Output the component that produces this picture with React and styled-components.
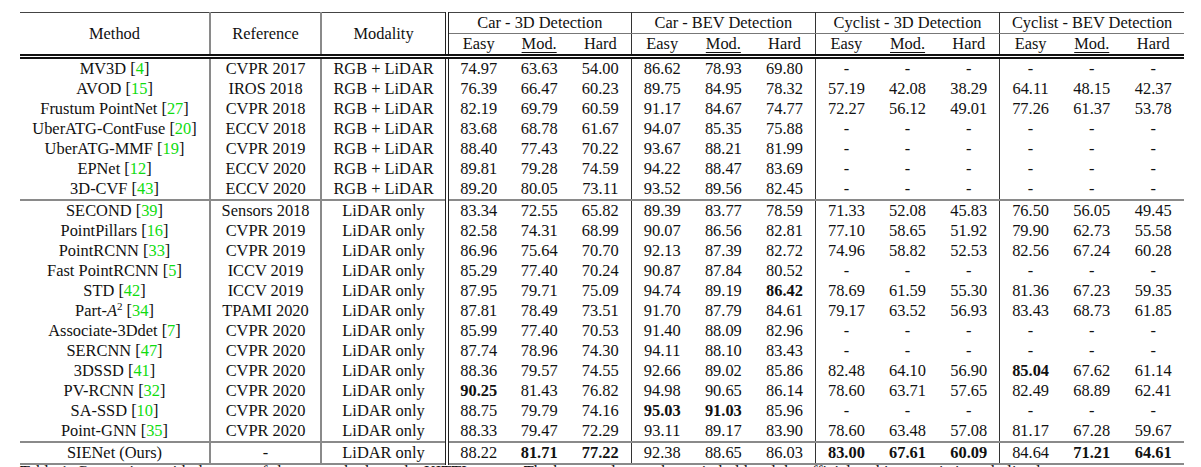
import React from "react";
import styled, { createGlobalStyle } from "styled-components";

const GlobalStyle = createGlobalStyle`
  html, body {
    margin: 0;
    padding: 0;
    background: #fff;
  }
  body {
    font-family: "Liberation Serif", "Times New Roman", serif;
    color: #111;
    overflow: hidden;
  }
`;

const Page = styled.div`
  padding: 12px 0 0 20px;
  width: 1164px;
`;

const Table = styled.table`
  width: 1164px;
  border-collapse: collapse;
  table-layout: fixed;
  font-size: 16.4px;
  border-top: 1px solid #444;
  border-bottom: 2px solid #8a8a8a;
`;

const Col = styled.col`
  width: ${({ $w }) => $w}px;
`;

const edgeStyles = {
  gray: "border-right: 2px solid #8a8a8a;",
  double: "border-right: 4px double #222;",
  group: "border-right: 1px solid #333;",
};

const HeadCell = styled.th`
  padding: 0;
  height: 20px;
  line-height: 20px;
  font-weight: 400;
  text-align: center;
  white-space: nowrap;
  ${({ $edge }) => edgeStyles[$edge] || ""}
  ${({ $split }) => ($split ? "border-bottom: 1px solid #777;" : "")}
  ${({ $rule }) => ($rule ? "border-bottom: 5px double #111;" : "")}
`;

const Underlined = styled.span`
  text-decoration: underline;
  text-decoration-thickness: 1px;
  text-underline-offset: 3px;
`;

const Row = styled.tr`
  ${({ $rule }) => ($rule ? "td { border-top: 2px solid #8a8a8a; }" : "")}
`;

const Cell = styled.td`
  padding: 0;
  height: 20px;
  line-height: 20px;
  text-align: center;
  white-space: nowrap;
  font-weight: ${({ $bold }) => ($bold ? 700 : 400)};
  ${({ $edge }) => edgeStyles[$edge] || ""}
`;

const Cite = styled.span`
  color: #0fdc0f;
`;

const Sup = styled.sup`
  font-size: 11px;
  line-height: 0;
  vertical-align: 6px;
`;

const Caption = styled.p`
  margin: 0;
  padding-top: 0;
  font-size: 16.4px;
  line-height: 14px;
  white-space: nowrap;
`;

const D = "- - - - - -";

const fusion = [
  ["MV3D", "4", "CVPR 2017", "74.97 63.63 54.00 86.62 78.93 69.80", D],
  ["AVOD", "15", "IROS 2018", "76.39 66.47 60.23 89.75 84.95 78.32", "57.19 42.08 38.29 64.11 48.15 42.37"],
  ["Frustum PointNet", "27", "CVPR 2018", "82.19 69.79 60.59 91.17 84.67 74.77", "72.27 56.12 49.01 77.26 61.37 53.78"],
  ["UberATG-ContFuse", "20", "ECCV 2018", "83.68 68.78 61.67 94.07 85.35 75.88", D],
  ["UberATG-MMF", "19", "CVPR 2019", "88.40 77.43 70.22 93.67 88.21 81.99", D],
  ["EPNet", "12", "ECCV 2020", "89.81 79.28 74.59 94.22 88.47 83.69", D],
  ["3D-CVF", "43", "ECCV 2020", "89.20 80.05 73.11 93.52 89.56 82.45", D],
];

const lidar = [
  ["SECOND", "39", "Sensors 2018", "83.34 72.55 65.82 89.39 83.77 78.59", "71.33 52.08 45.83 76.50 56.05 49.45"],
  ["PointPillars", "16", "CVPR 2019", "82.58 74.31 68.99 90.07 86.56 82.81", "77.10 58.65 51.92 79.90 62.73 55.58"],
  ["PointRCNN", "33", "CVPR 2019", "86.96 75.64 70.70 92.13 87.39 82.72", "74.96 58.82 52.53 82.56 67.24 60.28"],
  ["Fast PointRCNN", "5", "ICCV 2019", "85.29 77.40 70.24 90.87 87.84 80.52", D],
  ["STD", "42", "ICCV 2019", "87.95 79.71 75.09 94.74 89.19 *86.42", "78.69 61.59 55.30 81.36 67.23 59.35"],
  ["PartA", "34", "TPAMI 2020", "87.81 78.49 73.51 91.70 87.79 84.61", "79.17 63.52 56.93 83.43 68.73 61.85"],
  ["Associate-3Ddet", "7", "CVPR 2020", "85.99 77.40 70.53 91.40 88.09 82.96", D],
  ["SERCNN", "47", "CVPR 2020", "87.74 78.96 74.30 94.11 88.10 83.43", D],
  ["3DSSD", "41", "CVPR 2020", "88.36 79.57 74.55 92.66 89.02 85.86", "82.48 64.10 56.90 *85.04 67.62 61.14"],
  ["PV-RCNN", "32", "CVPR 2020", "*90.25 81.43 76.82 94.98 90.65 86.14", "78.60 63.71 57.65 82.49 68.89 62.41"],
  ["SA-SSD", "10", "CVPR 2020", "88.75 79.79 74.16 *95.03 *91.03 85.96", D],
  ["Point-GNN", "35", "CVPR 2020", "88.33 79.47 72.29 93.11 89.17 83.90", "78.60 63.48 57.08 81.17 67.28 59.67"],
];

const groups = [
  "Car - 3D Detection",
  "Car - BEV Detection",
  "Cyclist - 3D Detection",
  "Cyclist - BEV Detection",
];

const edgeFor = (i) => {
  if (i < 2) return "gray";
  if (i === 2) return "double";
  if (i < 14 && (i - 3) % 3 === 2) return "group";
  return undefined;
};

const MethodName = ({ name, cite }) => (
  <>
    {name === "PartA" ? (
      <>
        Part-<i>A</i>
        <Sup>2</Sup>
      </>
    ) : (
      name
    )}
    {cite && (
      <>
        {" "}[<Cite>{cite}</Cite>]
      </>
    )}
  </>
);

const DataRow = ({ row, modality, rule }) => {
  const [name, cite, venue, car, cyc] = row;
  const nums = `${car} ${cyc}`.split(" ");
  return (
    <Row $rule={rule}>
      <Cell $edge="gray">
        <MethodName name={name} cite={cite} />
      </Cell>
      <Cell $edge="gray">{venue}</Cell>
      <Cell $edge="double">{modality}</Cell>
      {nums.map((n, k) => (
        <Cell key={k} $edge={edgeFor(k + 3)} $bold={n.startsWith("*")}>
          {n.replace("*", "")}
        </Cell>
      ))}
    </Row>
  );
};

export default function App() {
  return (
    <Page>
      <GlobalStyle />
      <Table>
        <colgroup>
          <Col $w={190} />
          <Col $w={111} />
          <Col $w={126} />
          {Array.from({ length: 12 }, (_, i) => (
            <Col key={i} $w={61.4} />
          ))}
        </colgroup>
        <thead>
          <tr>
            <HeadCell rowSpan={2} $edge="gray" $rule>
              Method
            </HeadCell>
            <HeadCell rowSpan={2} $edge="gray" $rule>
              Reference
            </HeadCell>
            <HeadCell rowSpan={2} $edge="double" $rule>
              Modality
            </HeadCell>
            {groups.map((g, i) => (
              <HeadCell key={g} colSpan={3} $split $edge={i < 3 ? "group" : undefined}>
                {g}
              </HeadCell>
            ))}
          </tr>
          <tr>
            {Array.from({ length: 12 }, (_, i) => (
              <HeadCell key={i} $rule $edge={edgeFor(i + 3)}>
                {i % 3 === 0 ? "Easy" : i % 3 === 1 ? <Underlined>Mod.</Underlined> : "Hard"}
              </HeadCell>
            ))}
          </tr>
        </thead>
        <tbody>
          {fusion.map((r) => (
            <DataRow key={r[0]} row={r} modality="RGB + LiDAR" />
          ))}
          {lidar.map((r, i) => (
            <DataRow key={r[0]} row={r} modality="LiDAR only" rule={i === 0} />
          ))}
          <DataRow
            row={[
              "SIENet (Ours)",
              null,
              "-",
              "88.22 *81.71 *77.22 92.38 88.65 86.03",
              "*83.00 *67.61 *60.09 84.64 *71.21 *64.61",
            ]}
            modality="LiDAR only"
            rule
          />
        </tbody>
      </Table>
      <Caption>
        Table 1. Comparison with the state-of-the-art methods on the KITTI test set. The best results are
        shown in bold and the official ranking metric is underlined.
      </Caption>
    </Page>
  );
}
